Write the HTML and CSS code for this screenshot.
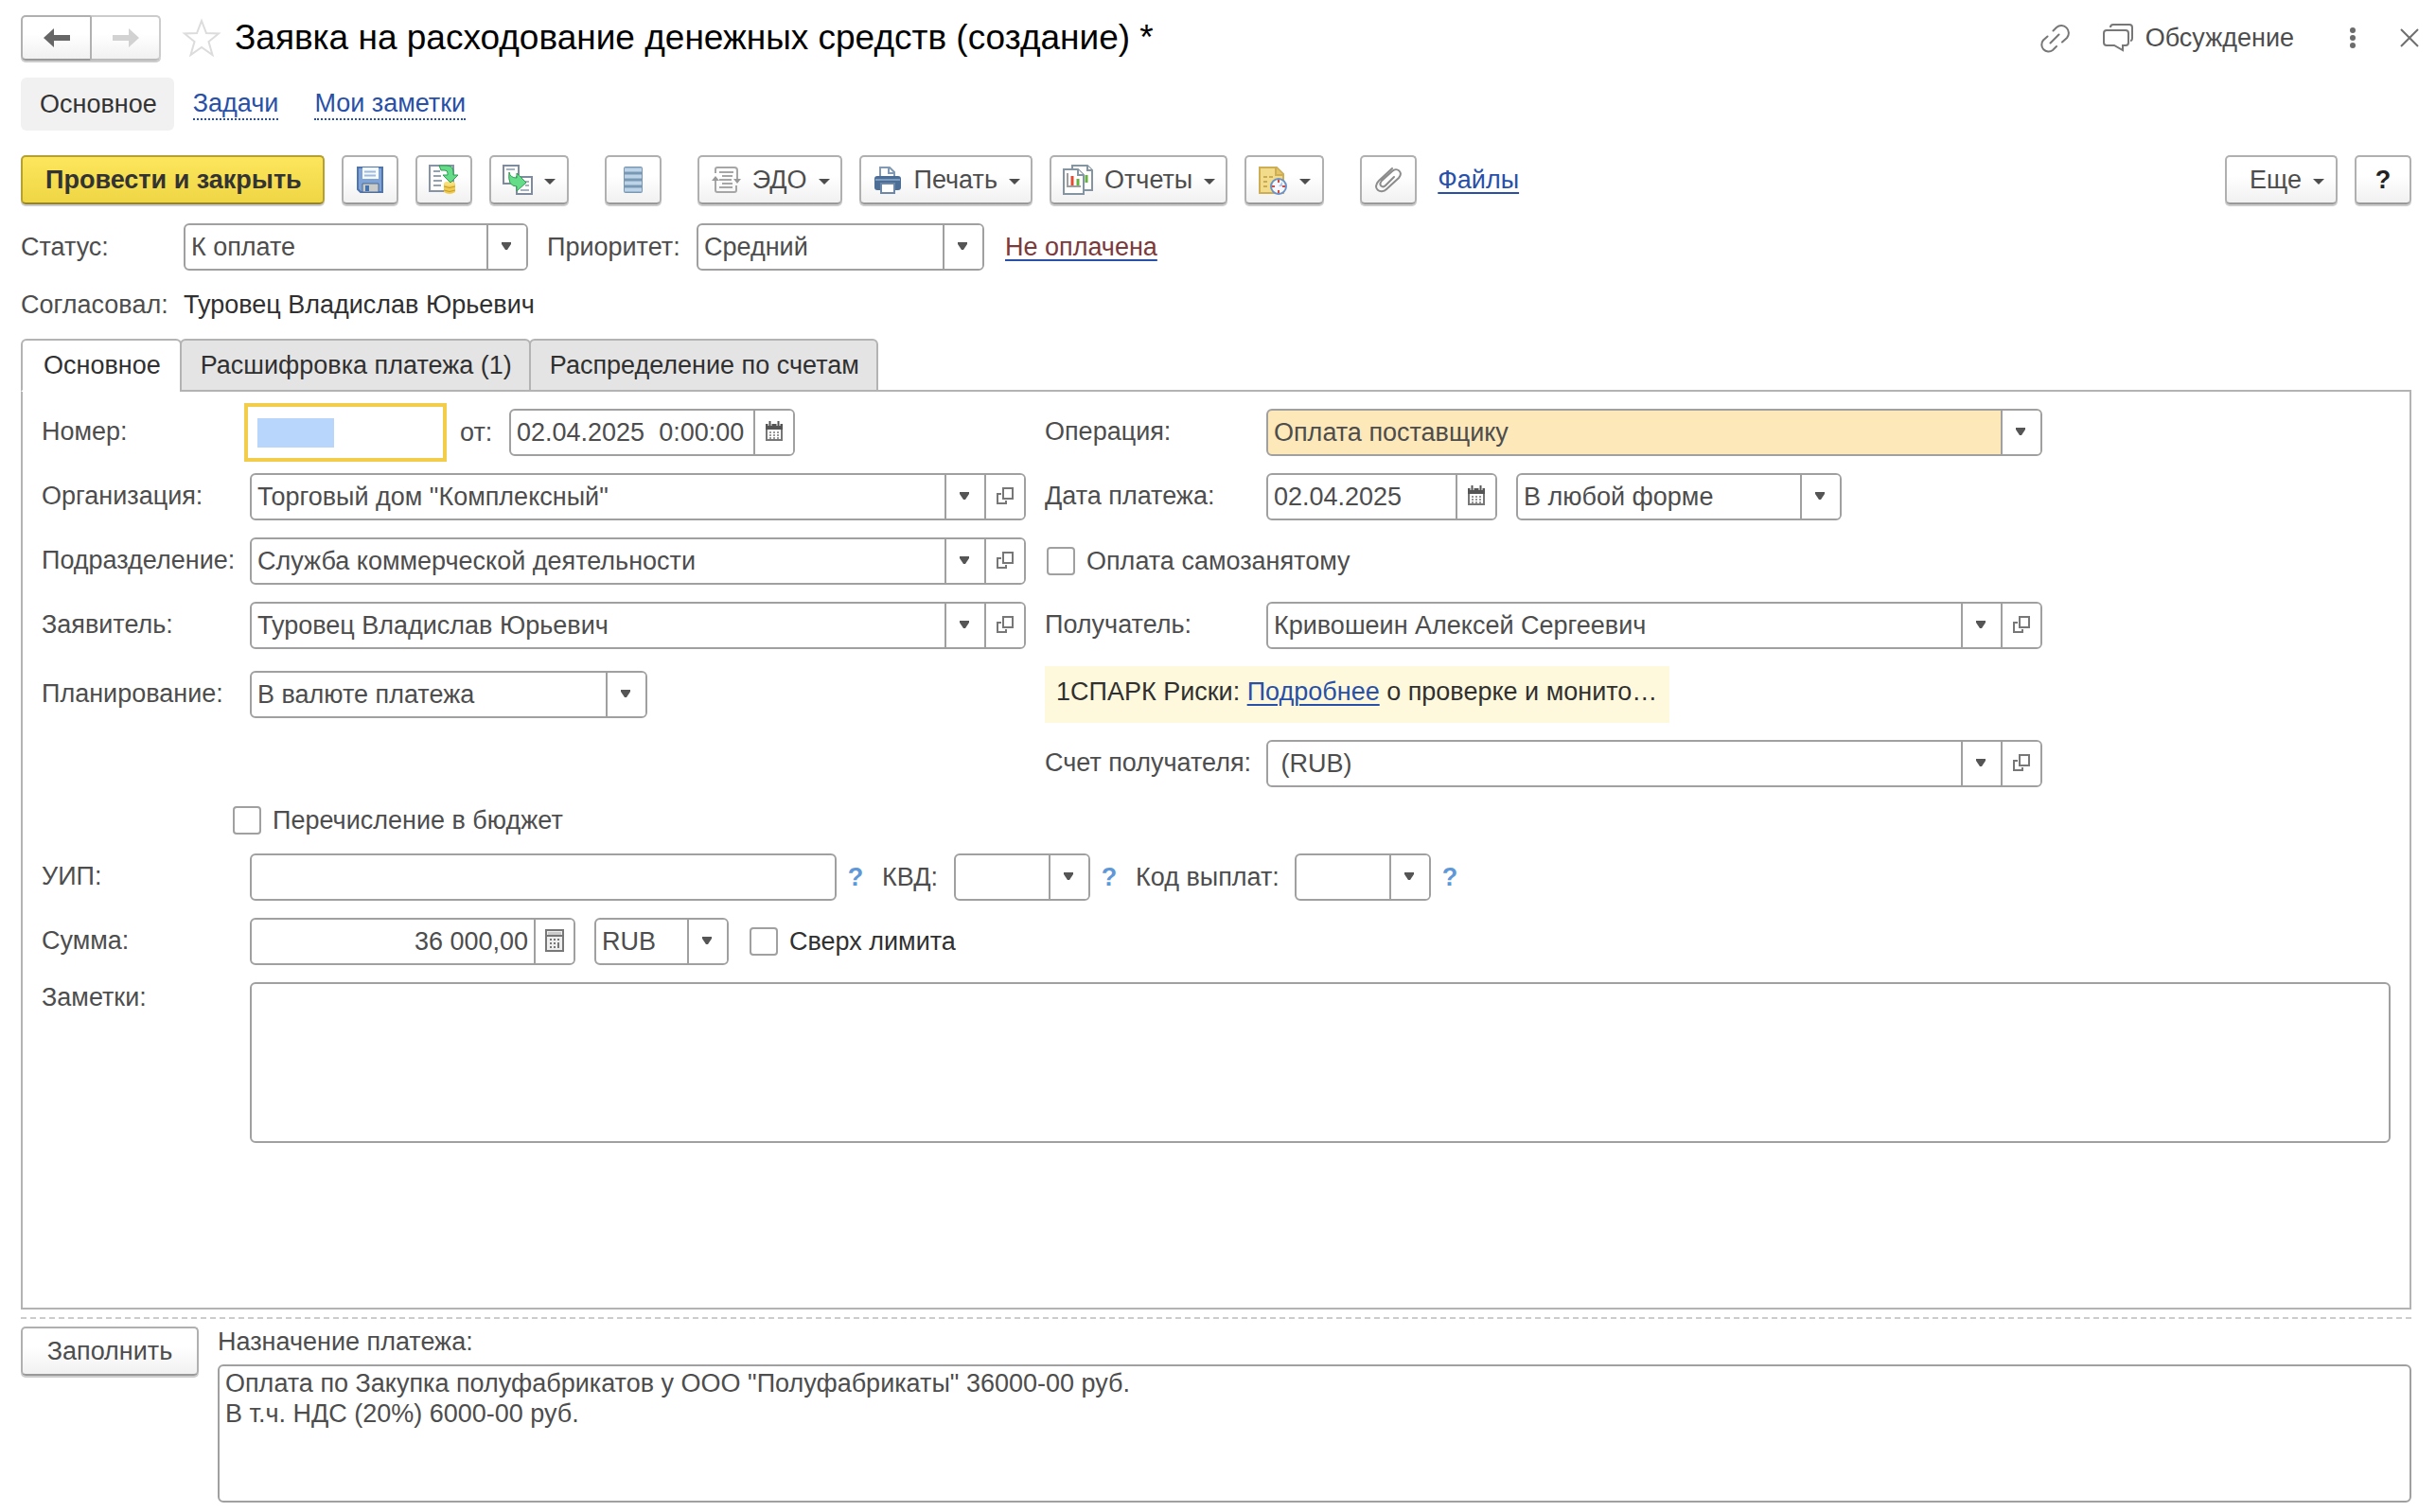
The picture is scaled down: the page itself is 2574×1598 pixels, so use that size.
FILE: index.html
```html
<!DOCTYPE html>
<html lang="ru">
<head>
<meta charset="utf-8">
<title>Заявка на расходование денежных средств (создание) *</title>
<link rel="stylesheet" href="styles.css">
</head>
<body>
<svg class="sprite" aria-hidden="true">
  <symbol id="caret" viewBox="0 0 12 6"><path d="M0 0h12L6 6z" fill="currentColor"/></symbol>
  <symbol id="caret-small" viewBox="0 0 10 8"><path d="M0 0h10v2L6 8H4L0 2z" fill="currentColor"/></symbol>
  <symbol id="open" viewBox="0 0 20 20"><path d="M8 2h10v11H8zM6 8H2v10h9v-3" fill="none" stroke="#777" stroke-width="2"/></symbol>
  <symbol id="calendar" viewBox="0 0 20 22"><path d="M2 4h16v16H2z" fill="#fff" stroke="#777" stroke-width="2"/><path d="M1 3h18v6H1z" fill="currentColor"/><path d="M5.500 0v5M14.500 0v5" stroke="#fff" stroke-width="4"/><path d="M5.500 0v5M14.500 0v5" stroke="currentColor" stroke-width="2"/><path d="M5 12h10M5 15h10M5 18h10" stroke="#999" stroke-width="2" stroke-dasharray="2 2"/></symbol>
  <symbol id="calc" viewBox="0 0 20 24"><path d="M1 1h18v22H1z" fill="#eee" stroke="#777" stroke-width="2"/><path d="M3 3h14v3H3z" fill="#ccc"/><path d="M2 7h16" stroke="#777" stroke-width="2"/><path d="M5 11h10M5 15h6M5 19h6" stroke="#777" stroke-width="2" stroke-dasharray="2 2"/><path d="M14 14v6" stroke="#777" stroke-width="2"/></symbol>
</svg>

<header class="title-bar">
  <div class="history">
    <button type="button" class="btn history-back" aria-label="Назад"><svg width="28" height="22" viewBox="0 0 28 22"><path d="M0 11 11 1v7h17v6H11v7z" fill="#666"/></svg></button>
    <button type="button" class="btn history-next" aria-label="Вперед"><svg width="28" height="22" viewBox="0 0 28 22"><path d="M28 11 17 1v7H0v6h17v7z" fill="#d2d2d2"/></svg></button>
  </div>
  <button type="button" class="plain" aria-label="В избранное"><svg width="42" height="42" viewBox="0 0 42 42"><path d="M21 3l5 13 13 .5-10.500 8.500 4 14L21 31 9.500 39l4-14L3 16.500 16 16z" fill="#fff" stroke="#dcdcdc" stroke-width="2"/></svg></button>
  <h1>Заявка на расходование денежных средств (создание) *</h1>
  <div class="window-tools">
    <button type="button" class="plain" aria-label="Ссылка"><svg width="32" height="32" viewBox="0 0 32 32" fill="none" stroke="#777" stroke-width="2" stroke-linecap="round"><path d="M14.500 8.500 18 5a7.800 7.800 0 0 1 11 11l-5 4.500M8.500 14.500 4 18.500A7.300 7.300 0 0 0 14 29l4-4M11.500 21.500l9-9"/></svg></button>
    <button type="button" class="plain discuss"><svg width="34" height="32" viewBox="0 0 34 32" fill="none" stroke="#777" stroke-width="2"><path d="M5 8h20q3 0 3 3v10q0 3-3 3h-3v5l-9-5H5q-3 0-3-3V11q0-3 3-3zM9 5q0-3 3-3h17q3 0 3 3v11q0 3-2 3"/></svg>Обсуждение</button>
    <button type="button" class="plain" aria-label="Еще действия"><svg width="8" height="24" viewBox="0 0 8 24" fill="#6c6c6c"><circle cx="4" cy="4" r="3"/><circle cx="4" cy="12" r="3"/><circle cx="4" cy="20" r="3"/></svg></button>
    <button type="button" class="plain" aria-label="Закрыть"><svg width="20" height="20" viewBox="0 0 20 20"><path d="M1 1l18 18M19 1 1 19" stroke="#707070" stroke-width="2"/></svg></button>
  </div>
</header>

<nav class="sections">
  <span class="section-current">Основное</span>
  <a href="#tasks">Задачи</a>
  <a href="#notes">Мои заметки</a>
</nav>

<div class="toolbar">
  <div class="tool-group">
    <button type="button" class="btn btn-main">Провести и закрыть</button>
    <button type="button" class="btn btn-icon" aria-label="Записать"><svg width="32" height="32" viewBox="0 0 32 32"><path d="M3 3h26v26H6l-3-3z" fill="#7fa3d4" stroke="#4f74ae" stroke-width="2"/><path d="M8 3h17v12H8z" fill="#f5faff"/><path d="M10 7.500h12M10 11.500h12" stroke="#9db9dc" stroke-width="2"/><path d="M8 20h17v9H8z" fill="#c9ccc9" stroke="#4d6a94"/><path d="M11 22h4v6h-4z" fill="#4672ab"/></svg></button>
    <button type="button" class="btn btn-icon" aria-label="Провести"><svg width="32" height="32" viewBox="0 0 32 32"><path d="M1 1h25v27H1z" fill="#fff" stroke="#8794a6" stroke-width="2"/><path d="M5 7h7M5 12h8M5 17h9M5 22h8" stroke="#96a1ae" stroke-width="2"/><path d="M16 20h12v9q-6 4-12 0z" fill="#f0cc4e"/><ellipse cx="22" cy="20" rx="6" ry="2.500" fill="#f8df7c"/><path d="M16 23q6 3 12 0M16 27q6 3 12 0" fill="none" stroke="#c79a2e"/><path d="M11 1h8q7 0 7 7v3h5l-8 8-8-8h5V9q0-3-3-3h-4z" fill="#65dc88" stroke="#2f9d52"/></svg></button>
    <button type="button" class="btn" aria-label="Создать на основании"><svg width="32" height="32" viewBox="0 0 32 32"><path d="M1 1h16v19H1z" fill="#fff" stroke="#7e8b9e" stroke-width="2"/><path d="M4 5h9" stroke="#a7b2c0" stroke-width="2"/><path d="M15 13h16v18H15z" fill="#fff" stroke="#7e8b9e" stroke-width="2"/><path d="M24 18h4M24 22h4M19 27h9" stroke="#a7b2c0" stroke-width="2"/><path d="M7 8q1 6 8 6v-5l10 10-10 9v-5Q5 23 7 8z" fill="#65dc88" stroke="#2f9d52"/></svg><svg class="caret"><use href="#caret"/></svg></button>
  </div>
  <div class="tool-group">
    <button type="button" class="btn btn-icon" aria-label="Реестр"><svg width="32" height="32" viewBox="0 0 32 32"><rect x="6" y="2" width="20" height="28" rx="2" fill="#7898b3"/><path d="M7 5.500h18M7 12.500h18M7 19.500h18M7 26.500h18" stroke="#bdd4e8" stroke-width="4"/></svg></button>
  </div>
  <div class="tool-group">
    <button type="button" class="btn btn-text"><svg width="32" height="32" viewBox="0 0 32 32" fill="none" stroke="#a6a6a6" stroke-width="2"><path d="M5 9V5q0-2 2-2h18q3 0 3 3v9M27 22v5q0 2-2 2H7q-2 0-2-2V16M9 8h15M12 12h11M9 16h13M12 20h11M9 24h14"/><path d="M1 17 5 12l4 5zM24 15h8l-4 5z" fill="#999" stroke="none"/></svg>ЭДО<svg class="caret"><use href="#caret"/></svg></button>
    <button type="button" class="btn btn-text"><svg width="32" height="32" viewBox="0 0 32 32"><path d="M8 3h10l5 5v7H8z" fill="#fff" stroke="#8299b5" stroke-width="2"/><path d="M17 3v6h6" fill="none" stroke="#8299b5" stroke-width="2"/><rect x="2" y="12" width="28" height="15" rx="3" fill="#4c6d95"/><path d="M3 16h26" stroke="#7f9dbe" stroke-width="2"/><path d="M9 20h14v10H9z" fill="#fff" stroke="#6c87a8" stroke-width="2"/></svg>Печать<svg class="caret"><use href="#caret"/></svg></button>
    <button type="button" class="btn btn-text"><svg width="32" height="32" viewBox="0 0 32 32" fill="#fff" stroke="#8494a1" stroke-width="2"><path d="M10 1h16l5 5v21H10z"/><path d="M26 1v5h5" /><path d="M25 11v8" stroke="#65b33e" stroke-width="3"/><path d="M1 5h15l6 6v20H1z"/><path d="M16 5v6h6"/><path d="M5 9v14h14" stroke="#9e9e9e"/><path d="M10 12v10" stroke="#e34b32" stroke-width="3"/><path d="M16 15v7" stroke="#65b33e" stroke-width="3"/></svg>Отчеты<svg class="caret"><use href="#caret"/></svg></button>
    <button type="button" class="btn" aria-label="Напоминания"><svg width="32" height="32" viewBox="0 0 32 32"><path d="M2 3h18l7 7v20H2z" fill="#f2dc8c" stroke="#cdae55" stroke-width="2"/><path d="M19 3v8h8" fill="#e3c46b" stroke="#cdae55" stroke-width="2"/><path d="M6 13h11M6 18h6M6 23h6" stroke="#c9ab55" stroke-width="2" stroke-dasharray="4 2"/><circle cx="22" cy="23" r="8" fill="#f5f9ff" stroke="#6b92c6" stroke-width="2"/><path d="M22 23l4-5v5z" fill="#a9c6ec"/><path d="M22 16v3M22 27v3M15 23h3M26 23h3" stroke="#d94b3b" stroke-width="2"/></svg><svg class="caret"><use href="#caret"/></svg></button>
  </div>
  <div class="tool-group">
    <button type="button" class="btn btn-icon" aria-label="Прикрепить файл"><svg width="32" height="32" viewBox="0 0 32 32" fill="none" stroke="#8c8c8c" stroke-width="2" stroke-linecap="round"><path d="M20 4 6 17c-8 8 2 15 8 9L27 14c5-6-2-12-7-7L9 17c-4 5 1 8 4 5l9-9"/></svg></button>
    <a href="#files" class="files">Файлы</a>
  </div>
  <div class="tool-group tool-end">
    <button type="button" class="btn btn-more">Еще<svg class="caret"><use href="#caret"/></svg></button>
    <button type="button" class="btn btn-icon btn-help" aria-label="Справка">?</button>
  </div>
</div>

<div class="status-row">
  <label for="status" class="w-status">Статус:</label>
  <div class="field f-status"><select id="status"><option>К оплате</option></select><span class="drop"><svg class="caret-small"><use href="#caret-small"/></svg></span></div>
  <label for="priority" class="w-priority">Приоритет:</label>
  <div class="field f-priority"><select id="priority"><option>Средний</option></select><span class="drop"><svg class="caret-small"><use href="#caret-small"/></svg></span></div>
  <a href="#payment" class="unpaid">Не оплачена</a>
</div>
<div class="approved"><span class="w-status">Согласовал:</span><span class="dark">Туровец Владислав Юрьевич</span></div>

<div class="tabs" role="tablist">
  <button type="button" class="tab tab-active" role="tab" aria-selected="true">Основное</button>
  <button type="button" class="tab" role="tab" aria-selected="false">Расшифровка платежа (1)</button>
  <button type="button" class="tab" role="tab" aria-selected="false">Распределение по счетам</button>
</div>

<main class="panel">
  <div class="pair">
    <div class="row">
      <label class="name" for="number">Номер:</label><input id="number" class="number" type="text">
      <label for="doc-date" class="w-from">от:</label>
      <div class="field f-datetime"><input id="doc-date" type="text" value="02.04.2025  0:00:00"><button type="button" class="cell" aria-label="Выбрать дату"><svg width="20" height="22"><use href="#calendar"/></svg></button></div>
    </div>
    <div class="row">
      <label class="name name-wide" for="operation">Операция:</label>
      <div class="field grow accent"><select id="operation"><option>Оплата поставщику</option></select><span class="drop"><svg class="caret-small"><use href="#caret-small"/></svg></span></div>
    </div>
  </div>
  <div class="pair">
    <div class="row">
      <label class="name" for="org">Организация:</label>
      <div class="field field-ref grow"><select id="org"><option>Торговый дом "Комплексный"</option></select><span class="drop"><svg class="caret-small"><use href="#caret-small"/></svg></span><button type="button" class="cell" aria-label="Открыть"><svg width="20" height="20"><use href="#open"/></svg></button></div>
    </div>
    <div class="row">
      <label class="name name-wide" for="pay-date">Дата платежа:</label>
      <div class="field f-date"><input id="pay-date" type="text" value="02.04.2025"><button type="button" class="cell" aria-label="Выбрать дату"><svg width="20" height="22"><use href="#calendar"/></svg></button></div>
      <div class="field f-form"><select aria-label="Форма оплаты"><option>В любой форме</option></select><span class="drop"><svg class="caret-small"><use href="#caret-small"/></svg></span></div>
    </div>
  </div>
  <div class="pair">
    <div class="row">
      <label class="name" for="dept">Подразделение:</label>
      <div class="field field-ref grow"><select id="dept"><option>Служба коммерческой деятельности</option></select><span class="drop"><svg class="caret-small"><use href="#caret-small"/></svg></span><button type="button" class="cell" aria-label="Открыть"><svg width="20" height="20"><use href="#open"/></svg></button></div>
    </div>
    <div class="row"><label class="check check-inset"><input type="checkbox">Оплата самозанятому</label></div>
  </div>
  <div class="pair">
    <div class="row">
      <label class="name" for="applicant">Заявитель:</label>
      <div class="field field-ref grow"><select id="applicant"><option>Туровец Владислав Юрьевич</option></select><span class="drop"><svg class="caret-small"><use href="#caret-small"/></svg></span><button type="button" class="cell" aria-label="Открыть"><svg width="20" height="20"><use href="#open"/></svg></button></div>
    </div>
    <div class="row">
      <label class="name name-wide" for="payee">Получатель:</label>
      <div class="field field-ref grow"><select id="payee"><option>Кривошеин Алексей Сергеевич</option></select><span class="drop"><svg class="caret-small"><use href="#caret-small"/></svg></span><button type="button" class="cell" aria-label="Открыть"><svg width="20" height="20"><use href="#open"/></svg></button></div>
    </div>
  </div>
  <div class="pair">
    <div class="row">
      <label class="name" for="planning">Планирование:</label>
      <div class="field f-planning"><select id="planning"><option>В валюте платежа</option></select><span class="drop"><svg class="caret-small"><use href="#caret-small"/></svg></span></div>
    </div>
    <div class="row"><p class="spark">1СПАРК Риски: <a href="#spark">Подробнее</a> о проверке и монито…</p></div>
  </div>
  <div class="pair">
    <div class="row"></div>
    <div class="row">
      <label class="name name-wide" for="account">Счет получателя:</label>
      <div class="field field-ref grow"><select id="account"><option>&nbsp;(RUB)</option></select><span class="drop"><svg class="caret-small"><use href="#caret-small"/></svg></span><button type="button" class="cell" aria-label="Открыть"><svg width="20" height="20"><use href="#open"/></svg></button></div>
    </div>
  </div>
  <div class="row budget"><label class="check check-inset"><input type="checkbox">Перечисление в бюджет</label></div>
  <div class="row">
    <label class="name" for="uip">УИП:</label><div class="field f-uip"><input id="uip" type="text"></div>
    <button type="button" class="hint" aria-label="Подсказка: УИП">?</button>
    <label for="kvd" class="w-kvd">КВД:</label>
    <div class="field f-code"><select id="kvd"><option></option></select><span class="drop"><svg class="caret-small"><use href="#caret-small"/></svg></span></div>
    <button type="button" class="hint" aria-label="Подсказка: КВД">?</button>
    <label for="paycode" class="w-paycode">Код выплат:</label>
    <div class="field f-code"><select id="paycode"><option></option></select><span class="drop"><svg class="caret-small"><use href="#caret-small"/></svg></span></div>
    <button type="button" class="hint" aria-label="Подсказка: код выплат">?</button>
  </div>
  <div class="row">
    <label class="name" for="sum">Сумма:</label>
    <div class="field f-sum"><input id="sum" type="text" value="36 000,00"><button type="button" class="cell" aria-label="Калькулятор"><svg width="20" height="24"><use href="#calc"/></svg></button></div>
    <div class="field f-currency"><select aria-label="Валюта"><option>RUB</option></select><span class="drop"><svg class="caret-small"><use href="#caret-small"/></svg></span></div>
    <label class="check dark"><input type="checkbox">Сверх лимита</label>
  </div>
  <div class="row row-top">
    <label class="name" for="notes">Заметки:</label><textarea id="notes" class="notes"></textarea>
  </div>
</main>

<div class="splitter"></div>

<footer class="purpose">
  <button type="button" class="btn btn-fill">Заполнить</button>
  <div class="purpose-text">
    <label for="purpose">Назначение платежа:</label>
    <textarea id="purpose">Оплата по Закупка полуфабрикатов у ООО "Полуфабрикаты" 36000-00 руб.
В т.ч. НДС (20%) 6000-00 руб.</textarea>
  </div>
</footer>
</body>
</html>
```
FILE: styles.css
```css
*, *::before, *::after { box-sizing: border-box; }

body {
  display: flex;
  flex-direction: column;
  min-height: 100vh;
  margin: 0;
  padding: 16px 26px 10px 22px;
  background: #fff;
  color: #4d4d4d;
  font: 27px/32px "Liberation Sans", Arial, sans-serif;
}

button, input, select, textarea { font: inherit; color: inherit; margin: 0; }
button { cursor: pointer; }
svg { display: block; flex: none; }
a { color: #2850a8; text-decoration-thickness: 2px; text-underline-offset: 4px; }
.sprite { display: none; }
.caret { width: 12px; height: 6px; }
.caret-small { width: 10px; height: 8px; margin-bottom: 2px; }
.dark { color: #303030; }

/* Buttons */
.btn {
  display: flex;
  align-items: center;
  justify-content: center;
  gap: 12px;
  height: 52px;
  padding: 0 12px;
  border: 2px solid #b0b0b0;
  border-bottom-color: #999;
  border-radius: 5px;
  background: linear-gradient(#fff 40%, #f1f1f1);
  box-shadow: 0 2px 0 #ccc;
  white-space: nowrap;
}
.btn .caret { margin-top: 4px; }
.btn-icon { width: 60px; padding: 0; }
.btn-text { padding: 0 11px 0 12px; }
.btn-main {
  padding: 0 22px 0 24px;
  border-color: #b5a032;
  border-bottom-color: #94832a;
  background: linear-gradient(#fde65c, #eed645);
  color: #333;
  font-weight: bold;
}
.btn-more { padding-left: 24px; }
.btn-help { color: #222; font-weight: bold; }
.plain {
  display: flex;
  align-items: center;
  gap: 12px;
  padding: 0;
  border: 0;
  background: none;
}

/* Title */
.title-bar { display: flex; align-items: center; height: 48px; }
.history { display: flex; margin-right: 22px; }
.history .btn { width: 75px; height: 48px; }
.history-back { border-radius: 5px 0 0 5px; }
.history .history-next { margin-left: -2px; border-radius: 0 5px 5px 0; border-color: #ccc #ccc #bbb #b0b0b0; }
h1 { margin: 0 0 0 14px; color: #000; font-size: 37px; line-height: 44px; font-weight: normal; white-space: nowrap; }
.window-tools { display: flex; align-items: center; margin-left: auto; }
.discuss { margin: 0 58px 0 34px; }
.window-tools .plain:last-child { margin: 0 -8px 0 46px; }

.sections { display: flex; align-items: center; gap: 38px; margin-top: 18px; }
.section-current { margin-right: -18px; padding: 12px 18px 12px 20px; border-radius: 6px; background: #f1f1f1; color: #333; }
.sections a { line-height: 32px; text-decoration: none; border-bottom: 2px dotted #2850a8; }

/* Toolbar */
.toolbar { display: flex; gap: 38px; margin-top: 26px; }
.tool-group { display: flex; align-items: center; gap: 18px; }
.tool-end { margin-left: auto; }
.files { margin-left: 4px; }

/* Fields */
.field {
  display: grid;
  grid-template-columns: minmax(0, 1fr) 42px;
  height: 50px;
  border: 2px solid #a0a0a0;
  border-radius: 6px;
  background: #fff;
  overflow: hidden;
}
.field-ref { grid-template-columns: minmax(0, 1fr) 42px 42px; }
.field input, .field select {
  grid-row: 1;
  grid-column: 1;
  width: 100%;
  height: 46px;
  padding: 0 6px;
  border: 0;
  border-radius: 0;
  outline: 0;
  background: none;
  appearance: none;
}
.field select { grid-column: 1 / 3; padding-right: 44px; }
.drop, .cell {
  display: flex;
  align-items: center;
  justify-content: center;
  padding: 0;
  border: 0;
  border-left: 2px solid #a0a0a0;
  background: #fff;
  color: #555;
}
.cell svg { margin-bottom: 2px; }
.drop { grid-row: 1; grid-column: 2; padding-right: 2px; pointer-events: none; }
.accent { background: #fce8b8; }
.grow { flex: 1; }

.f-status { width: 364px; }
.f-priority { width: 304px; }
.f-datetime { width: 302px; }
.f-date { width: 244px; }
.f-form { width: 344px; margin-left: 20px; }
.f-planning { width: 420px; }
.f-uip { width: 620px; grid-template-columns: 1fr; }
.f-code { width: 144px; }
.f-sum { width: 344px; }
.f-sum input { text-align: right; }
.f-currency { width: 142px; margin: 0 22px 0 20px; }

/* Status */
.status-row { display: flex; align-items: center; margin-top: 20px; }
.w-status { width: 172px; }
.w-priority { width: 158px; margin-left: 20px; }
.unpaid { margin-left: 22px; color: #7c3a3a; text-decoration-color: #2850a8; }
.approved { display: flex; margin: 20px 0 20px; }

/* Tabs */
.tabs { z-index: 1; display: flex; margin-bottom: -2px; }
.tab {
  height: 56px;
  padding: 0 18px 0 20px;
  border: 2px solid #b3b3b3;
  border-radius: 6px 6px 0 0;
  background: #e4e4e4;
  color: #303030;
}
.tab + .tab { margin-left: -2px; }
.tab-active { padding: 0 20px 0 22px; border-bottom-color: #fff; background: #fff; }

.panel {
  display: flex;
  flex: 1;
  flex-direction: column;
  gap: 18px;
  padding: 18px 20px;
  border: 2px solid #b3b3b3;
}
.pair { display: grid; grid-template-columns: minmax(0, 1040px) minmax(0, 1054px); align-items: center; gap: 20px; }
.row { display: flex; align-items: center; }
.row-top { align-items: flex-start; }
.name { flex: none; width: 220px; padding-bottom: 2px; white-space: nowrap; }
.name-wide { width: 234px; }

.number {
  width: 202px;
  height: 50px;
  padding: 0 6px;
  border: 0;
  outline: 4px solid #f2cc4b;
  outline-offset: 2px;
  background: #fff linear-gradient(#b8d5fc, #b8d5fc) 8px 10px / 81px 31px no-repeat;
}
.w-from { width: 52px; margin-left: 20px; }
.w-kvd { width: 76px; margin-left: 18px; }
.w-paycode { width: 168px; margin-left: 18px; }
.hint { width: 20px; margin-left: 10px; padding: 0; border: 0; background: none; color: #5f98d8; font-weight: bold; }

.check { display: flex; align-items: center; gap: 12px; white-space: nowrap; }
.check-inset { padding-left: 2px; }
.check input { flex: none; width: 30px; height: 30px; border: 2px solid #a0a0a0; border-radius: 4px; background: #fff; appearance: none; }
.budget { height: 34px; padding-left: 200px; }

.spark { width: 660px; height: 60px; margin: 0; padding: 11px 12px; background: #fef9dc; color: #303030; white-space: nowrap; overflow: hidden; }

textarea {
  display: block;
  width: 100%;
  padding: 2px 6px;
  border: 2px solid #a0a0a0;
  border-radius: 6px;
  background: #fff;
  resize: none;
}
.notes { height: 170px; }

.splitter {
  height: 2px;
  margin: 8px 0;
  background: repeating-linear-gradient(90deg, #ccc 0 6px, transparent 6px 10px);
}

.purpose { display: flex; align-items: flex-start; gap: 20px; }
.btn-fill { width: 188px; }
.purpose-text { display: flex; flex: 1; flex-direction: column; gap: 8px; }
.purpose-text textarea { height: 146px; }
```
